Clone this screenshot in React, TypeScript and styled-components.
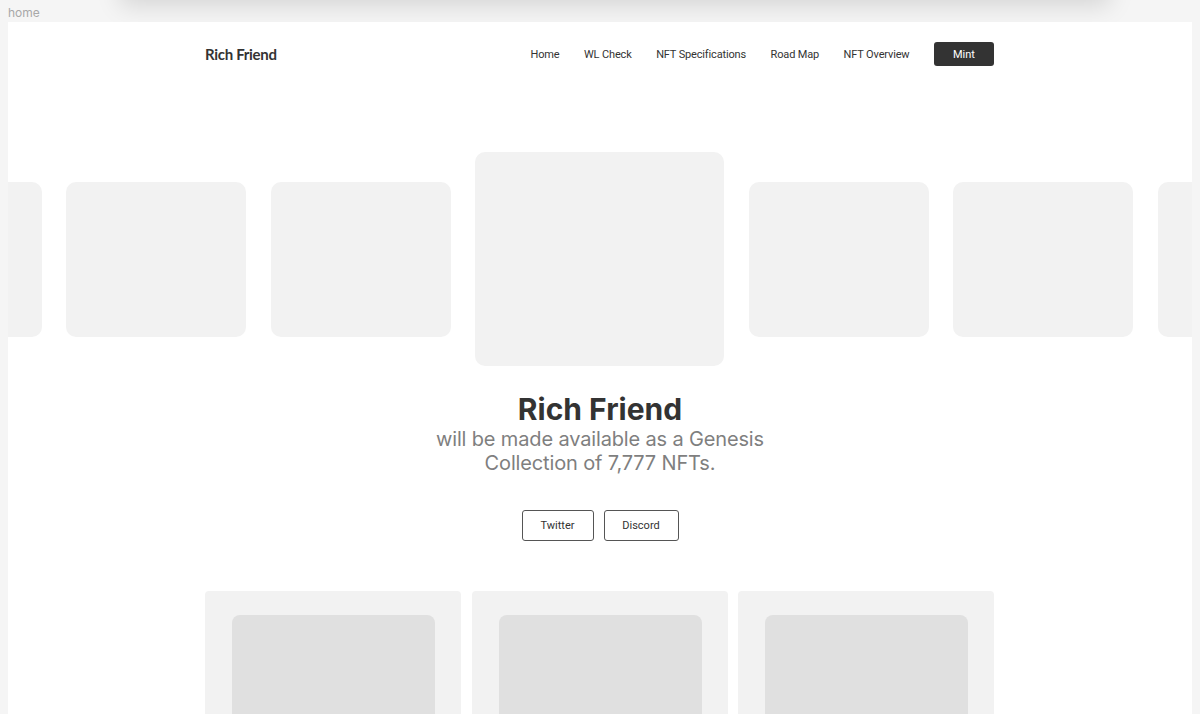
import styled, { createGlobalStyle } from 'styled-components'

const GlobalStyle = createGlobalStyle`
  html, body {
    margin: 0;
    padding: 0;
    background: #f5f5f5;
    font-family: Inter, 'Liberation Sans', sans-serif;
    color: #333;
    overflow: hidden;
  }
`

const Canvas = styled.div`
  position: relative;
  height: 714px;
  padding: 0 8px;
  overflow: hidden;
`

/* bottom edge of the frame that sits above this one on the canvas */
const FrameAbove = styled.div`
  position: absolute;
  top: -60px;
  left: 120px;
  width: 990px;
  height: 60px;
  background: #f5f5f5;
  box-shadow: 0 6px 24px rgba(0, 0, 0, 0.13);
`

const FrameLabel = styled.div`
  position: relative;
  height: 22px;
  line-height: 26px;
  font-size: 12px;
  color: #a8a8a8;
`

const Frame = styled.div`
  position: relative;
  width: 1184px;
  height: 692px;
  background: #fff;
  overflow: hidden;
`

const Container = styled.div`
  width: 790px;
  margin: 0 0 0 197px;
`

const Nav = styled.nav`
  display: flex;
  align-items: center;
  justify-content: space-between;
  height: 24px;
  padding-top: 20px;
`

const Logo = styled.div`
  font-family: Lato, sans-serif;
  font-size: 15px;
  font-weight: 700;
  letter-spacing: -0.3px;
  color: #333;
`

const Links = styled.div`
  display: flex;
  align-items: center;
  gap: 24.5px;
  padding-right: 1px;
`

const NavLink = styled.a`
  font-family: Roboto, sans-serif;
  font-size: 11px;
  letter-spacing: -0.15px;
  color: #333;
  text-decoration: none;
`

const MintButton = styled.button`
  width: 60px;
  height: 24px;
  border: none;
  border-radius: 3px;
  background: #333;
  color: #fff;
  font-family: Roboto, sans-serif;
  font-size: 11px;
  padding: 0;
`

const Carousel = styled.div`
  display: flex;
  justify-content: center;
  align-items: center;
  gap: 24.5px;
  margin-top: 86px;
  height: 214px;
  padding-right: 1px;
`

const Slide = styled.div<{ $big?: boolean }>`
  flex-shrink: 0;
  width: ${(p) => (p.$big ? 249 : 180)}px;
  height: ${(p) => (p.$big ? 214 : 155)}px;
  border-radius: 10px;
  background: #f2f2f2;
`

const Hero = styled.section`
  text-align: center;
  margin-top: 25px;
`

const Title = styled.h1`
  margin: 0;
  font-size: 30px;
  line-height: 36px;
  font-weight: 700;
  color: #333;
`

const Subtitle = styled.p`
  margin: 0 auto;
  width: 360px;
  font-size: 20px;
  line-height: 24px;
  letter-spacing: -0.15px;
  color: #7f7f7f;
`

const Buttons = styled.div`
  display: flex;
  justify-content: center;
  gap: 10px;
  margin-top: 35px;
`

const OutlineButton = styled.button<{ $width: number }>`
  width: ${(p) => p.$width}px;
  height: 31px;
  padding: 0;
  border: 1px solid #555;
  border-radius: 3px;
  background: #fff;
  color: #333;
  font-family: Roboto, sans-serif;
  font-size: 11px;
`

const Cards = styled.div`
  display: grid;
  grid-template-columns: repeat(3, 1fr);
  gap: 10.5px;
  margin-top: 50px;
  padding-right: 1px;
`

const Card = styled.div`
  height: 320px;
  padding-top: 24px;
  border-radius: 4px;
  background: #f2f2f2;
  box-sizing: border-box;
`

const CardImage = styled.div`
  width: 203px;
  height: 203px;
  margin: 0 0 0 27px;
  border-radius: 8px;
  background: #e0e0e0;
`

const links = ['Home', 'WL Check', 'NFT Specifications', 'Road Map', 'NFT Overview']

export default function App() {
  return (
    <>
      <GlobalStyle />
      <Canvas>
        <FrameAbove />
        <FrameLabel>home</FrameLabel>
        <Frame>
          <Container>
            <Nav>
              <Logo>Rich Friend</Logo>
              <Links>
                {links.map((l) => (
                  <NavLink key={l} href="#">
                    {l}
                  </NavLink>
                ))}
                <MintButton>Mint</MintButton>
              </Links>
            </Nav>
          </Container>

          <Carousel>
            <Slide />
            <Slide />
            <Slide />
            <Slide $big />
            <Slide />
            <Slide />
            <Slide />
          </Carousel>

          <Container>
            <Hero>
              <Title>Rich Friend</Title>
              <Subtitle>will be made available as a Genesis Collection of 7,777 NFTs.</Subtitle>
              <Buttons>
                <OutlineButton $width={72}>Twitter</OutlineButton>
                <OutlineButton $width={75}>Discord</OutlineButton>
              </Buttons>
            </Hero>
            <Cards>
              <Card>
                <CardImage />
              </Card>
              <Card>
                <CardImage />
              </Card>
              <Card>
                <CardImage />
              </Card>
            </Cards>
          </Container>
        </Frame>
      </Canvas>
    </>
  )
}
